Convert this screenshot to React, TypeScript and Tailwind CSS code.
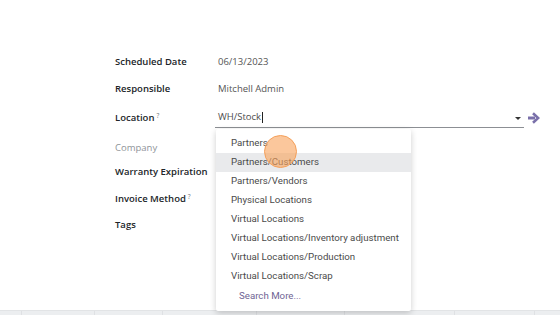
import React from "react";

const items = [
  "Partners",
  "Partners/Customers",
  "Partners/Vendors",
  "Physical Locations",
  "Virtual Locations",
  "Virtual Locations/Inventory adjustment",
  "Virtual Locations/Production",
  "Virtual Locations/Scrap",
];

function Row({ label, value, help, muted, className, children }: { label: string; value?: string; help?: boolean; muted?: boolean; className?: string; children?: React.ReactNode }) {
  return (
    <div className={`flex items-center h-[20px] ${className ?? ""}`}>
      <div className={`w-[103px] shrink-0 whitespace-nowrap text-[9.5px] ${muted ? "text-[#8f9499] font-medium" : "font-semibold text-[#212529]"}`}>
        {label}
        {help && <sup className="ml-[2px] text-[6.5px] text-[#6c757d] font-normal">?</sup>}
      </div>
      {children ?? <div className="text-[9.5px] text-[#555] whitespace-nowrap">{value}</div>}
    </div>
  );
}

export default function App() {
  return (
    <div className="w-[560px] h-[315px] bg-white flex flex-col overflow-hidden font-['Open_Sans',sans-serif]">
      <div className="flex-1 pl-[115px] pt-[52px]">
        <Row label="Scheduled Date" value="06/13/2023" />
        <Row label="Responsible" value="Mitchell Admin" className="mt-[7px]" />
        <Row label="Location" help className="mt-[9px]">
          <div className="relative">
            <div className="flex items-center w-[309px] h-[20px] border-b border-[#8c8f94] -ml-[3px] pl-[3px]">
              <span className="text-[9.5px] text-[#4c4c4c]">WH/Stock</span>
              <span className="w-px h-[11px] bg-[#222] ml-[1px]" />
              <span className="ml-auto mr-[3px] mt-[1px] border-x-[3px] border-x-transparent border-t-[3px] border-t-[#333]" />
            </div>
            <svg className="absolute left-[309px] top-[4px]" width="13" height="12" viewBox="0 0 13 12">
              <path d="M1 6h7" stroke="#7a70aa" strokeWidth="3" fill="none" />
              <path d="M6 1.2 11.2 6 6 10.8" stroke="#7a70aa" strokeWidth="2.6" fill="none" />
            </svg>
            <div className="absolute left-[-2px] top-[21px] w-[195px] z-10 bg-white rounded-[2px] shadow-[0_2px_6px_rgba(0,0,0,0.2)] pt-[5px] pb-[5px] font-['Roboto',sans-serif]">
              {items.map((it, i) => (
                <div key={it} className={`h-[19px] flex items-center pl-[15px] whitespace-nowrap text-[9.7px] text-[#4a4a4a] ${i === 1 ? "bg-[#e9eaec]" : ""}`}>
                  {it}
                </div>
              ))}
              <div className="h-[20px] flex items-center pl-[23px] text-[9.7px] text-[#6f6494]">Search More...</div>
              <div className="absolute left-[48px] top-[6px] w-[33px] h-[33px] rounded-full bg-[#f9a25a]/60 border border-[#f5a05a]" />
            </div>
          </div>
        </Row>
        <Row label="Company" muted className="mt-[10px]" />
        <Row label="Warranty Expiration" className="mt-[4px]" />
        <Row label="Invoice Method" help className="mt-[7px]" />
        <Row label="Tags" className="mt-[6px]" />
      </div>
      <div className="h-[5px] bg-[#eceef0] border-t border-[#e2e4e6] flex">
        {[22, 73, 68, 94, 88, 110, 80].map((w, i) => (
          <div key={i} style={{ width: w }} className="h-full border-r border-[#dfe1e4]" />
        ))}
      </div>
    </div>
  );
}
